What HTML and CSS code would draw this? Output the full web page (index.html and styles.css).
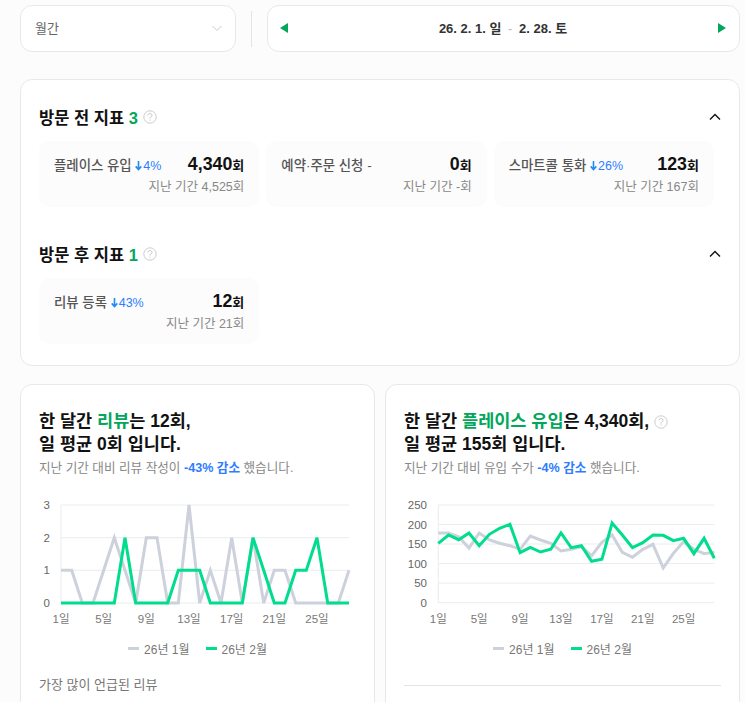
FILE: index.html
```html
<!DOCTYPE html>
<html lang="ko">
<head>
  <meta charset="utf-8">
  <title>방문 지표</title>
  <link rel="stylesheet" href="styles.css">
</head>
<body>
  <div class="filter-bar">
    <div class="period-select">
      <span>월간</span>
      <svg class="select-arrow" width="12" height="12" viewBox="0 0 12 12"><path d="M1.5 4 6 8.5 10.5 4"/></svg>
    </div>
    <div class="filter-divider"></div>
    <div class="date-range">
      <svg width="8" height="10" viewBox="0 0 8 10"><path d="M8 0v10L0 5z"/></svg>
      <div class="date-text">26. 2. 1. 일 <span class="date-dash">-</span> 2. 28. 토</div>
      <svg width="8" height="10" viewBox="0 0 8 10"><path d="M0 0v10l8-5z"/></svg>
    </div>
  </div>

  <section class="panel">
    <div class="group-head">
      <h2>방문 전 지표 <em>3</em></h2>
      <svg class="help" width="14" height="14" viewBox="0 0 14 14"><circle cx="7" cy="7" r="6.2"/><path d="M5 5.4c0-1.2.9-1.9 2-1.9s2 .7 2 1.8c0 1.6-2 1.6-2 3.3M7 9.6v1.1"/></svg>
      <svg class="fold" width="12" height="8" viewBox="0 0 12 8"><path d="M1 6.5 6 1.5l5 5"/></svg>
    </div>
    <div class="metric-grid">
      <div class="metric">
        <div class="metric-top">
          <span class="metric-name">플레이스 유입 <b class="down"><svg class="down-arrow" width="7" height="10" viewBox="0 0 7 10"><path d="M3.5 0v8M.7 5.4l2.8 3.2 2.8-3.2"/></svg>4%</b></span>
          <span class="metric-value">4,340<small>회</small></span>
        </div>
        <div class="metric-prev">지난 기간 4,525회</div>
      </div>
      <div class="metric">
        <div class="metric-top">
          <span class="metric-name">예약·주문 신청 -</span>
          <span class="metric-value">0<small>회</small></span>
        </div>
        <div class="metric-prev">지난 기간 -회</div>
      </div>
      <div class="metric">
        <div class="metric-top">
          <span class="metric-name">스마트콜 통화 <b class="down"><svg class="down-arrow" width="7" height="10" viewBox="0 0 7 10"><path d="M3.5 0v8M.7 5.4l2.8 3.2 2.8-3.2"/></svg>26%</b></span>
          <span class="metric-value">123<small>회</small></span>
        </div>
        <div class="metric-prev">지난 기간 167회</div>
      </div>
    </div>

    <div class="group-head group-after">
      <h2>방문 후 지표 <em>1</em></h2>
      <svg class="help" width="14" height="14" viewBox="0 0 14 14"><circle cx="7" cy="7" r="6.2"/><path d="M5 5.4c0-1.2.9-1.9 2-1.9s2 .7 2 1.8c0 1.6-2 1.6-2 3.3M7 9.6v1.1"/></svg>
      <svg class="fold" width="12" height="8" viewBox="0 0 12 8"><path d="M1 6.5 6 1.5l5 5"/></svg>
    </div>
    <div class="metric-grid">
      <div class="metric">
        <div class="metric-top">
          <span class="metric-name">리뷰 등록 <b class="down"><svg class="down-arrow" width="7" height="10" viewBox="0 0 7 10"><path d="M3.5 0v8M.7 5.4l2.8 3.2 2.8-3.2"/></svg>43%</b></span>
          <span class="metric-value">12<small>회</small></span>
        </div>
        <div class="metric-prev">지난 기간 21회</div>
      </div>
    </div>
  </section>

  <div class="report-row">
    <section class="report">
      <h3>한 달간 <em>리뷰</em>는 12회,<br>일 평균 0회 입니다.</h3>
      <p class="report-sub">지난 기간 대비 리뷰 작성이 <b>-43% 감소</b> 했습니다.</p>
      <svg class="chart" width="353" height="132" viewBox="0 0 353 132">
        <g class="grid">
          <path d="M31 10H319M31 42.7H319M31 75.3H319M31 108H319M31 10V108"/>
        </g>
        <g class="y-labels">
          <text x="20" y="14">3</text>
          <text x="20" y="47">2</text>
          <text x="20" y="79">1</text>
          <text x="20" y="112">0</text>
        </g>
        <polyline class="line-prev" points="31,75.3 41.7,75.3 52.3,108 63,108 73.7,75.3 84.3,42.7 95,75.3 105.7,108 116.3,42.7 127,42.7 137.7,108 148.3,108 159,10 169.7,108 180.3,75.3 191,108 201.7,42.7 212.3,108 223,42.7 233.7,108 244.3,75.3 255,75.3 265.7,108 276.3,108 287,108 297.7,108 308.3,108 319,75.3"/>
        <polyline class="line-now" points="31,108 41.7,108 52.3,108 63,108 73.7,108 84.3,108 95,42.7 105.7,108 116.3,108 127,108 137.7,108 148.3,75.3 159,75.3 169.7,75.3 180.3,108 191,108 201.7,108 212.3,108 223,42.7 233.7,75.3 244.3,108 255,108 265.7,75.3 276.3,75.3 287,42.7 297.7,108 308.3,108 319,108"/>
        <g class="x-labels">
          <text x="31" y="128">1일</text>
          <text x="73.7" y="128">5일</text>
          <text x="116.3" y="128">9일</text>
          <text x="159" y="128">13일</text>
          <text x="201.7" y="128">17일</text>
          <text x="244.3" y="128">21일</text>
          <text x="287" y="128">25일</text>
        </g>
      </svg>
      <div class="legend">
        <span class="legend-item"><i class="swatch swatch-prev"></i>26년 1월</span>
        <span class="legend-item"><i class="swatch swatch-now"></i>26년 2월</span>
      </div>
      <div class="mention-title">가장 많이 언급된 리뷰</div>
    </section>

    <section class="report">
      <h3>한 달간 <em>플레이스 유입</em>은 4,340회, <svg class="help help-title" width="14" height="14" viewBox="0 0 14 14"><circle cx="7" cy="7" r="6.2"/><path d="M5 5.4c0-1.2.9-1.9 2-1.9s2 .7 2 1.8c0 1.6-2 1.6-2 3.3M7 9.6v1.1"/></svg><br>일 평균 155회 입니다.</h3>
      <p class="report-sub">지난 기간 대비 유입 수가 <b>-4% 감소</b> 했습니다.</p>
      <svg class="chart" width="353" height="132" viewBox="0 0 353 132">
        <g class="grid">
          <path d="M43.3 10H319.3M43.3 29.5H319.3M43.3 49H319.3M43.3 68.6H319.3M43.3 88.1H319.3M43.3 107.7H319.3M43.3 10V107.7"/>
        </g>
        <g class="y-labels">
          <text x="32" y="14">250</text>
          <text x="32" y="34">200</text>
          <text x="32" y="53">150</text>
          <text x="32" y="73">100</text>
          <text x="32" y="92">50</text>
          <text x="32" y="112">0</text>
        </g>
        <polyline class="line-prev" points="43.3,38 53.5,38 63.7,41.7 74,53 84.2,38 94.4,45 104.6,48.3 114.9,50.7 125.1,54.3 135.3,41 145.5,45 155.8,48.3 166,56 176.2,54.3 186.4,51.7 196.6,60.7 206.9,47.3 217.1,40 227.3,57.3 237.5,62.3 247.8,54.3 258,49.3 268.2,73 278.4,58.3 288.6,46.7 298.9,54.3 309.1,58.7 319.3,57.3"/>
        <polyline class="line-now" points="43.3,48.3 53.5,40 63.7,44.7 74,38 84.2,50.7 94.4,39.3 104.6,33.3 114.9,29.3 125.1,57.7 135.3,52.3 145.5,57 155.8,54.3 166,38 176.2,52.7 186.4,50.7 196.6,66.3 206.9,64.3 217.1,28 227.3,40 237.5,52.7 247.8,47.7 258,40 268.2,40.3 278.4,45.7 288.6,43.3 298.9,58.7 309.1,43.3 319.3,63.3"/>
        <g class="x-labels">
          <text x="43.3" y="128">1일</text>
          <text x="84.2" y="128">5일</text>
          <text x="125.1" y="128">9일</text>
          <text x="166" y="128">13일</text>
          <text x="206.9" y="128">17일</text>
          <text x="247.8" y="128">21일</text>
          <text x="288.6" y="128">25일</text>
        </g>
      </svg>
      <div class="legend">
        <span class="legend-item"><i class="swatch swatch-prev"></i>26년 1월</span>
        <span class="legend-item"><i class="swatch swatch-now"></i>26년 2월</span>
      </div>
      <div class="report-rule"></div>
    </section>
  </div>
</body>
</html>
```

FILE: styles.css
```css
html {
  overflow: hidden;
}
body {
  margin: 0;
  width: 745px;
  height: 702px;
  overflow: hidden;
  padding: 5px 5px 0 20px;
  box-sizing: border-box;
  background-color: #fcfcfc;
  color: #111;
  font-family: "Liberation Sans", "Noto Sans CJK KR", sans-serif;
}
.filter-bar {
  display: flex;
  align-items: center;
  height: 47px;
}
.period-select {
  width: 216px;
  height: 47px;
  box-sizing: border-box;
  padding: 0 12px 2px 14px;
  display: flex;
  align-items: center;
  justify-content: space-between;
  background: #fff;
  border: 1px solid #e8e8e8;
  border-radius: 12px;
  font-size: 13px;
  color: #666;
}
.select-arrow path {
  fill: none;
  stroke: #ccc;
}
.filter-divider {
  width: 1px;
  height: 36px;
  margin: 0 15px;
  background: #e4e4e4;
}
.date-range {
  flex: 1;
  height: 47px;
  box-sizing: border-box;
  padding: 0 13px 2px 12px;
  display: flex;
  align-items: center;
  justify-content: space-between;
  background: #fff;
  border: 1px solid #e8e8e8;
  border-radius: 12px;
}
.date-range svg path {
  fill: #03a65a;
}
.date-text {
  font-size: 13px;
  font-weight: 700;
  color: #333;
}
.date-dash {
  margin: 0 3px;
  color: #bbb;
  font-weight: 400;
}
.panel {
  margin-top: 27px;
  height: 287px;
  box-sizing: border-box;
  padding: 24px 25px 0 18px;
  background: #fff;
  border: 1px solid #e8e8e8;
  border-radius: 12px;
}
.group-head {
  height: 26px;
  display: flex;
  align-items: center;
  gap: 5px;
  margin-bottom: 11px;
}
.group-after {
  margin-top: 34px;
}
.group-head h2 {
  margin: 0;
  font-size: 16.5px;
  font-weight: 700;
  color: #111;
}
h2 em, h3 em {
  font-style: normal;
  color: #03a65a;
}
.help circle {
  fill: none;
  stroke: #ccc;
}
.help path {
  fill: none;
  stroke: #c4c4c4;
}
.fold {
  margin-left: auto;
  margin-right: -7px;
}
.fold path {
  fill: none;
  stroke: #111;
  stroke-width: 1.4;
}
.metric-grid {
  display: grid;
  grid-template-columns: repeat(3, 1fr);
  gap: 7px;
}
.metric {
  height: 66px;
  box-sizing: border-box;
  padding: 12px 15px 0;
  background: #fcfcfc;
  border-radius: 10px;
}
.metric-top {
  display: flex;
  align-items: center;
  justify-content: space-between;
  height: 23px;
}
.metric-name {
  margin-bottom: 2px;
  font-size: 13.4px;
  font-weight: 500;
  color: #555;
}
.down {
  font-size: 12.5px;
  font-weight: 500;
  color: #2d7cff;
}
.down-arrow {
  margin-right: 1px;
  vertical-align: -1px;
}
.down-arrow path {
  fill: none;
  stroke: #1f8cf5;
  stroke-width: 1.6;
}
.metric-value {
  font-size: 17.8px;
  font-weight: 700;
  color: #111;
}
.metric-value small {
  font-size: 13px;
}
.metric-prev {
  text-align: right;
  font-size: 12.5px;
  color: #888;
}
.report-row {
  display: grid;
  grid-template-columns: 355px 355px;
  gap: 10px;
  margin-top: 18px;
}
.report {
  height: 400px;
  box-sizing: border-box;
  padding: 25px 18px 0;
  background: #fff;
  border: 1px solid #e8e8e8;
  border-radius: 12px;
}
.report h3 {
  margin: 0;
  font-size: 17.5px;
  line-height: 23px;
  font-weight: 700;
  color: #111;
}
.help-title {
  vertical-align: -2px;
}
.report-sub {
  margin: 3px 0 0;
  font-size: 12.6px;
  line-height: 18px;
  color: #888;
}
.report-sub b {
  color: #2d7cff;
}
.chart {
  display: block;
  margin: 18px 0 0 -9px;
}
.grid path {
  fill: none;
  stroke: #e9ecef;
}
.y-labels text {
  font-size: 11.5px;
  fill: #666;
  text-anchor: end;
}
.x-labels text {
  font-size: 11.5px;
  fill: #777;
  text-anchor: middle;
}
.line-prev {
  fill: none;
  stroke: #cdd1dc;
  stroke-width: 3;
}
.line-now {
  fill: none;
  stroke: #00dd8d;
  stroke-width: 3;
}
.legend {
  display: flex;
  justify-content: center;
  gap: 16px;
  margin-top: 13px;
  font-size: 12px;
  color: #777;
}
.legend-item {
  display: flex;
  align-items: center;
  gap: 5px;
}
.swatch {
  width: 11px;
  height: 3px;
}
.swatch-prev {
  background: #cdd1dc;
}
.swatch-now {
  background: #00dd8d;
}
.mention-title {
  margin-top: 17px;
  font-size: 13px;
  color: #777;
}
.report-rule {
  margin-top: 28px;
  height: 1px;
  background: #e4e4e4;
}
```
